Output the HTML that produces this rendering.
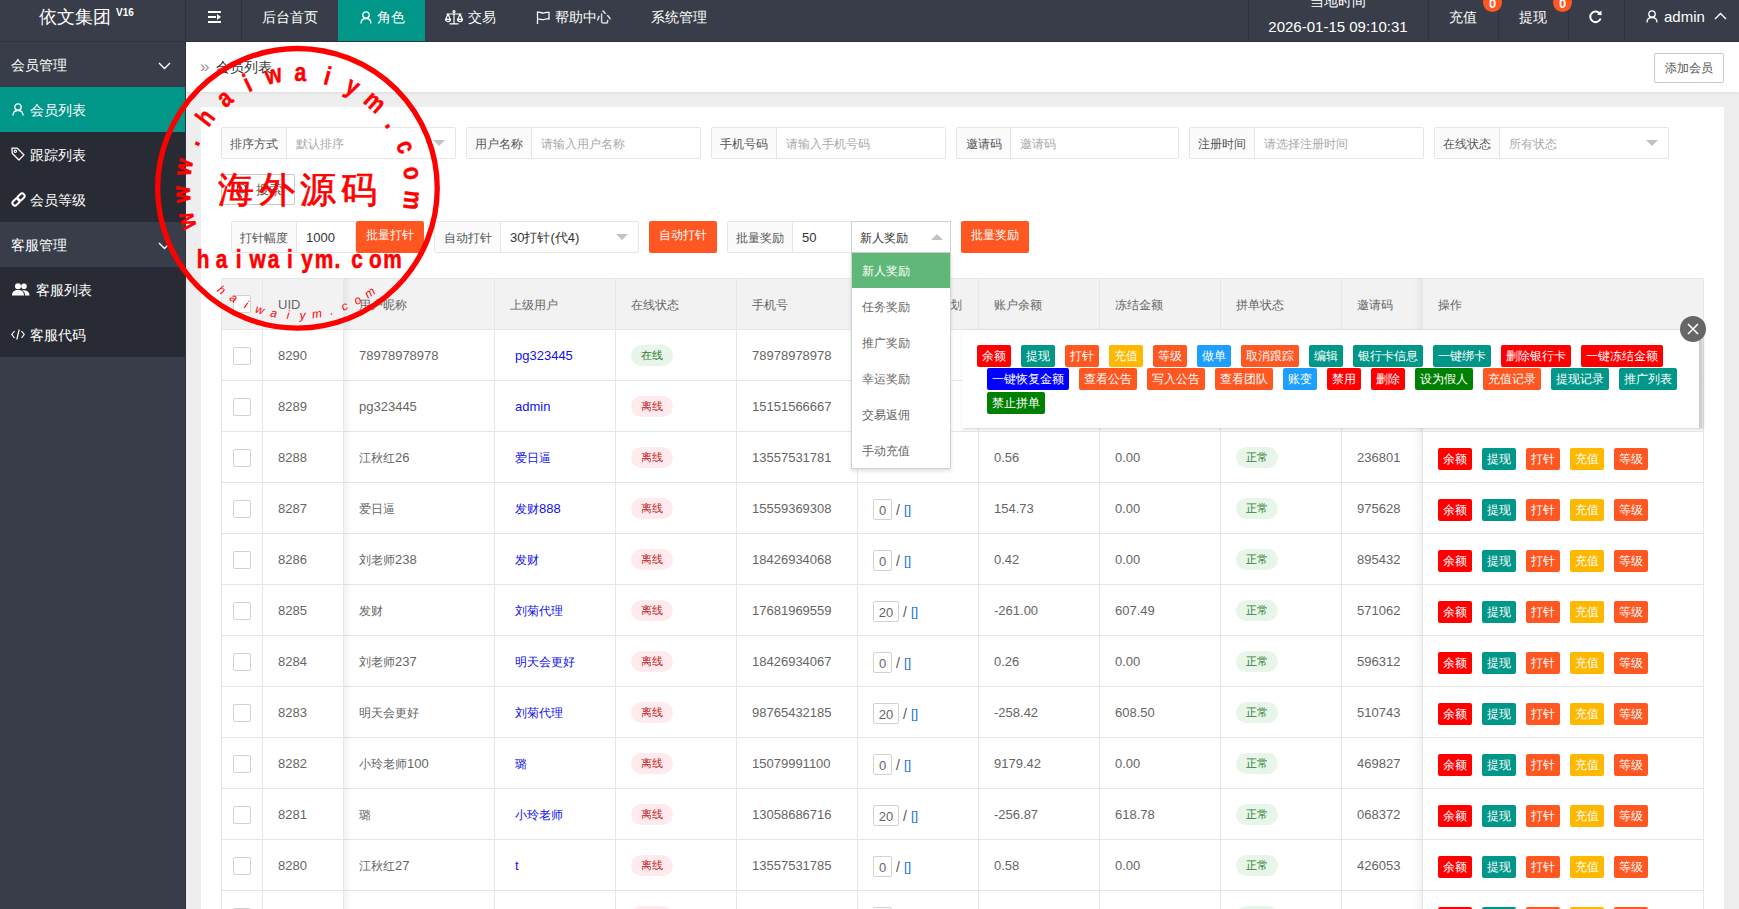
<!DOCTYPE html><html><head><meta charset="utf-8"><style>
*{box-sizing:border-box;margin:0;padding:0}
html,body{width:1739px;height:909px;overflow:hidden;background:#eeeeee;font-family:"Liberation Sans",sans-serif;color:#666;font-size:13px}
div,span{position:absolute;white-space:nowrap}
.hv{top:0;width:1px;height:41px;background:#30333c}
.nav{top:0;height:41px;line-height:34px;color:#fff;font-size:14px}
.sg{left:0;width:185px;height:45px;background:#393D49}
.si{left:0;width:185px;height:45px;background:#282B33}
.st{color:#fff;font-size:14px;line-height:20px}
.ig{height:32px;border:1px solid #e6e6e6;border-radius:2px;background:#fff;font-size:12px}
.lb{left:0;top:0;height:30px;line-height:32px;background:#FBFBFB;border-right:1px solid #e6e6e6;color:#555;text-align:center}
.ph{top:0;height:30px;line-height:32px;color:#aaa}
.vl{top:0;height:30px;line-height:32px;color:#333;font-size:13px}
.tri{width:0;height:0;border-left:6px solid transparent;border-right:6px solid transparent;border-top:6px solid #c2c2c2}
.tru{width:0;height:0;border-left:6px solid transparent;border-right:6px solid transparent;border-bottom:6px solid #c2c2c2}
.ob{height:32px;line-height:30px;background:#FF5722;color:#fff;font-size:12px;text-align:center;border-radius:2px}
.th{height:50px;line-height:52px;color:#666;font-size:13px}
em{font-style:normal;font-size:12.4px}
.td{line-height:52px;color:#666;font-size:13px}
.lk{color:#1010f0}
.bg{height:21px;line-height:21px;border-radius:11px;font-size:11px;text-align:center;width:42px}
.on{background:#e8f5e9;color:#2e7d32}
.off{background:#ffebee;color:#c62828}
.btn{height:22px;line-height:22px;color:#fff;font-size:12px;text-align:center;border-radius:2px}
.cb{width:18px;height:18px;border:1px solid #d2d2d2;border-radius:2px;background:#fff}
.nb{height:21px;border:1px solid #d2d2d2;border-radius:2px;line-height:21px;text-align:center;color:#666;font-size:13px;background:#fff}
</style></head><body>
<div style="left:0;top:0;width:1739px;height:42px;background:#393D49;border-bottom:1px solid #30333c"></div>
<div style="left:39px;top:0;height:34px;line-height:34px;color:#fff;font-size:18px">依文集团</div>
<div style="left:116px;top:7px;line-height:12px;color:#fff;font-size:10px;font-weight:bold">V16</div>
<div class="hv" style="left:185px"></div>
<div class="hv" style="left:241px"></div>
<div class="hv" style="left:1248px"></div>
<div class="hv" style="left:1428px"></div>
<div class="hv" style="left:1498px"></div>
<div class="hv" style="left:1568px"></div>
<div class="hv" style="left:1624px"></div>
<div style="left:338px;top:0;width:87px;height:41px;background:#009688"></div>
<div style="left:208px;top:11px;width:13px;height:2px;background:#fff"></div>
<div style="left:208px;top:16px;width:8px;height:2px;background:#fff"></div>
<div style="left:208px;top:21px;width:13px;height:2px;background:#fff"></div>
<div style="left:217px;top:14px;width:0;height:0;border-top:3px solid transparent;border-bottom:3px solid transparent;border-left:4px solid #fff"></div>
<div class="nav" style="left:262px">后台首页</div>
<svg style="position:absolute;left:360px;top:11px" width="12" height="13" viewBox="0 0 12 13"><circle cx="6" cy="4" r="3.2" fill="none" stroke="#fff" stroke-width="1.3"/><path d="M1 12.5 C1 8.5 3 7.5 6 7.5 C9 7.5 11 8.5 11 12.5" fill="none" stroke="#fff" stroke-width="1.3"/></svg>
<div class="nav" style="left:377px">角色</div>
<svg style="position:absolute;left:445px;top:10px" width="18" height="15" viewBox="0 0 18 15"><g fill="none" stroke="#fff" stroke-width="1.2"><circle cx="9" cy="1.6" r="1"/><path d="M9 2.6V13.5M4.5 13.9H13.5M1.5 4H16.5"/><path d="M3 4L0.8 9.3M3 4L5.2 9.3M15 4L12.8 9.3M15 4L17.2 9.3"/><path d="M0.5 9.3H5.5A2.5 2.3 0 0 1 0.5 9.3Z"/><path d="M12.5 9.3H17.5A2.5 2.3 0 0 1 12.5 9.3Z"/></g></svg>
<div class="nav" style="left:468px">交易</div>
<svg style="position:absolute;left:536px;top:11px" width="14" height="13" viewBox="0 0 14 13"><g fill="none" stroke="#fff" stroke-width="1.3"><path d="M1.5 0.5V13"/><path d="M1.5 1.5C4 0 6 3 8 2C10 1 12 1.5 13 1.5V8C12 8 10 7.5 8 8.5C6 9.5 4 7 1.5 8.5"/></g></svg>
<div class="nav" style="left:555px">帮助中心</div>
<div class="nav" style="left:651px">系统管理</div>
<div style="left:1248px;top:-9px;width:180px;text-align:center;line-height:20px;color:#fff;font-size:14px">当地时间</div>
<div style="left:1248px;top:17px;width:180px;text-align:center;line-height:20px;color:#fff;font-size:15px">2026-01-15 09:10:31</div>
<div class="nav" style="left:1449px">充值</div>
<div style="left:1483px;top:-7px;width:19px;height:19px;border-radius:50%;background:#FF5722;color:#fff;font-size:13px;font-weight:bold;line-height:21px;text-align:center">0</div>
<div class="nav" style="left:1519px">提现</div>
<div style="left:1553px;top:-7px;width:19px;height:19px;border-radius:50%;background:#FF5722;color:#fff;font-size:13px;font-weight:bold;line-height:21px;text-align:center">0</div>
<svg style="position:absolute;left:1588px;top:9px" width="15" height="15" viewBox="0 0 15 15"><path d="M12.2 5.2A5.3 5.3 0 1 0 12.6 9.5" fill="none" stroke="#fff" stroke-width="2"/><path d="M9 5.8L13.6 6.2L13.4 1.4Z" fill="#fff"/></svg>
<svg style="position:absolute;left:1646px;top:10px" width="12" height="13" viewBox="0 0 12 13"><circle cx="6" cy="4" r="3.2" fill="none" stroke="#fff" stroke-width="1.3"/><path d="M1 12.5 C1 8.5 3 7.5 6 7.5 C9 7.5 11 8.5 11 12.5" fill="none" stroke="#fff" stroke-width="1.3"/></svg>
<div class="nav" style="left:1664px;font-size:15px">admin</div>
<svg style="position:absolute;left:1714px;top:12px" width="13" height="8" viewBox="0 0 13 8"><path d="M1 7L6.5 1.5L12 7" fill="none" stroke="#fff" stroke-width="1.4"/></svg>
<div style="left:0;top:42px;width:186px;height:867px;background:#393D49;border-right:1px solid #30333c"></div>
<div class="sg" style="top:42px"></div>
<div class="st" style="left:11px;top:55px">会员管理</div>
<svg style="position:absolute;left:158px;top:62px" width="13" height="8" viewBox="0 0 13 8"><path d="M1 1L6.5 6.5L12 1" fill="none" stroke="#fff" stroke-width="1.4"/></svg>
<div style="left:0;top:87px;width:185px;height:45px;background:#009688"></div>
<svg style="position:absolute;left:12px;top:103px" width="12" height="13" viewBox="0 0 12 13"><circle cx="6" cy="4" r="3.2" fill="none" stroke="#fff" stroke-width="1.3"/><path d="M1 12.5 C1 8.5 3 7.5 6 7.5 C9 7.5 11 8.5 11 12.5" fill="none" stroke="#fff" stroke-width="1.3"/></svg>
<div class="st" style="left:30px;top:100px">会员列表</div>
<div class="si" style="top:132px"></div>
<svg style="position:absolute;left:11px;top:147px" width="14" height="14" viewBox="0 0 14 14"><path d="M1 1.2H6.3L13 7.9L7.9 13L1.2 6.3Z" fill="none" stroke="#fff" stroke-width="1.3" stroke-linejoin="round"/><circle cx="4.3" cy="4.3" r="1.2" fill="none" stroke="#fff" stroke-width="1.1"/></svg>
<div class="st" style="left:30px;top:145px">跟踪列表</div>
<div class="si" style="top:177px"></div>
<svg style="position:absolute;left:11px;top:192px" width="15" height="15" viewBox="0 0 15 15"><g fill="none" stroke="#fff" stroke-width="2"><rect x="-2.5" y="-4" width="5" height="8" rx="2.5" transform="translate(10 5) rotate(45)"/><rect x="-2.5" y="-4" width="5" height="8" rx="2.5" transform="translate(5 10) rotate(45)"/></g></svg>
<div class="st" style="left:30px;top:190px">会员等级</div>
<div class="sg" style="top:222px"></div>
<div class="st" style="left:11px;top:235px">客服管理</div>
<svg style="position:absolute;left:158px;top:242px" width="13" height="8" viewBox="0 0 13 8"><path d="M1 1L6.5 6.5L12 1" fill="none" stroke="#fff" stroke-width="1.4"/></svg>
<div class="si" style="top:267px"></div>
<svg style="position:absolute;left:12px;top:283px" width="18" height="13" viewBox="0 0 18 13"><g fill="#fff"><circle cx="6" cy="3.3" r="3"/><path d="M0 12.5C0 8.5 2.5 7 6 7C9.5 7 12 8.5 12 12.5Z"/><circle cx="12" cy="3.3" r="2.8"/><path d="M10 7.2C14 6.8 17.5 8 17.5 12.5H13C13 10 12 8.3 10 7.2Z"/></g></svg>
<div class="st" style="left:36px;top:280px">客服列表</div>
<div class="si" style="top:312px"></div>
<svg style="position:absolute;left:11px;top:329px" width="14" height="11" viewBox="0 0 14 11"><g fill="none" stroke="#fff" stroke-width="1.2"><path d="M3.5 2L0.8 5.5L3.5 9M10.5 2L13.2 5.5L10.5 9M8.2 0.5L5.8 10.5"/></g></svg>
<div class="st" style="left:30px;top:325px">客服代码</div>
<div style="left:186px;top:42px;width:1553px;height:50px;background:#fff;box-shadow:0 1px 3px rgba(0,0,0,.08)"></div>
<div style="left:200px;top:57px;line-height:20px;color:#999;font-size:17px">»</div>
<div style="left:216px;top:57px;line-height:20px;color:#333;font-size:14px">会员列表</div>
<div style="left:1654px;top:53px;width:70px;height:30px;border:1px solid #c9c9c9;border-radius:2px;background:#fff;color:#555;font-size:12px;line-height:28px;text-align:center">添加会员</div>
<div style="left:201px;top:107px;width:1523px;height:802px;background:#fff"></div>
<div class="ig" style="left:221px;top:127px;width:235px;height:32px"><div class="lb" style="width:65px;height:30px;line-height:32px">排序方式</div><div class="ph" style="left:74px;height:30px;line-height:32px">默认排序</div><div class="tri" style="left:211px;top:12px"></div></div>
<div class="ig" style="left:466px;top:127px;width:235px;height:32px"><div class="lb" style="width:65px;height:30px;line-height:32px">用户名称</div><div class="ph" style="left:74px;height:30px;line-height:32px">请输入用户名称</div></div>
<div class="ig" style="left:711px;top:127px;width:235px;height:32px"><div class="lb" style="width:65px;height:30px;line-height:32px">手机号码</div><div class="ph" style="left:74px;height:30px;line-height:32px">请输入手机号码</div></div>
<div class="ig" style="left:956px;top:127px;width:223px;height:32px"><div class="lb" style="width:54px;height:30px;line-height:32px">邀请码</div><div class="ph" style="left:63px;height:30px;line-height:32px">邀请码</div></div>
<div class="ig" style="left:1189px;top:127px;width:235px;height:32px"><div class="lb" style="width:65px;height:30px;line-height:32px">注册时间</div><div class="ph" style="left:74px;height:30px;line-height:32px">请选择注册时间</div></div>
<div class="ig" style="left:1434px;top:127px;width:235px;height:32px"><div class="lb" style="width:65px;height:30px;line-height:32px">在线状态</div><div class="ph" style="left:74px;height:30px;line-height:32px">所有状态</div><div class="tri" style="left:211px;top:12px"></div></div>
<div style="left:221px;top:174px;width:74px;height:31px;border:1px solid #c9c9c9;border-radius:2px;background:#fff"></div>
<svg style="position:absolute;left:236px;top:183px" width="13" height="13" viewBox="0 0 13 13"><circle cx="5.5" cy="5.5" r="4.3" fill="none" stroke="#555" stroke-width="1.3"/><path d="M8.7 8.7L12.3 12.3" stroke="#555" stroke-width="1.4"/></svg>
<div style="left:256px;top:180px;line-height:20px;color:#555;font-size:13px">搜索</div>
<div class="ig" style="left:231px;top:221px;width:125px;height:32px"><div class="lb" style="width:65px;height:30px;line-height:32px">打针幅度</div><div class="vl" style="left:74px;height:30px;line-height:32px">1000</div></div>
<div class="ob" style="left:356px;top:221px;width:68px;line-height:28px">批量打针</div>
<div class="ig" style="left:434px;top:221px;width:205px;height:32px"><div class="lb" style="width:66px;height:30px;line-height:32px">自动打针</div><div class="vl" style="left:75px;height:30px;line-height:32px">30打针(代4)</div><div class="tri" style="left:181px;top:12px"></div></div>
<div class="ob" style="left:649px;top:221px;width:68px;line-height:28px">自动打针</div>
<div class="ig" style="left:727px;top:221px;width:125px;height:32px"><div class="lb" style="width:65px;height:30px;line-height:32px">批量奖励</div><div class="vl" style="left:74px;height:30px;line-height:32px">50</div></div>
<div style="left:851px;top:221px;width:100px;height:32px;border:1px solid #d2d2d2;background:#fff"><div class="vl" style="left:8px;font-size:12px">新人奖励</div><div class="tru" style="left:79px;top:12px"></div></div>
<div class="ob" style="left:961px;top:221px;width:68px;line-height:28px">批量奖励</div>
<div style="left:221px;top:278px;width:1483px;height:631px;background:#fff;border:1px solid #e6e6e6;border-bottom:none"></div>
<div style="left:222px;top:279px;width:1481px;height:50px;background:#f2f2f2"></div>
<div style="left:221px;top:329px;width:1483px;height:1px;background:#e6e6e6"></div>
<div style="left:221px;top:380px;width:1483px;height:1px;background:#e6e6e6"></div>
<div style="left:221px;top:431px;width:1483px;height:1px;background:#e6e6e6"></div>
<div style="left:221px;top:482px;width:1483px;height:1px;background:#e6e6e6"></div>
<div style="left:221px;top:533px;width:1483px;height:1px;background:#e6e6e6"></div>
<div style="left:221px;top:584px;width:1483px;height:1px;background:#e6e6e6"></div>
<div style="left:221px;top:635px;width:1483px;height:1px;background:#e6e6e6"></div>
<div style="left:221px;top:686px;width:1483px;height:1px;background:#e6e6e6"></div>
<div style="left:221px;top:737px;width:1483px;height:1px;background:#e6e6e6"></div>
<div style="left:221px;top:788px;width:1483px;height:1px;background:#e6e6e6"></div>
<div style="left:221px;top:839px;width:1483px;height:1px;background:#e6e6e6"></div>
<div style="left:221px;top:890px;width:1483px;height:1px;background:#e6e6e6"></div>
<div style="left:262px;top:278px;width:1px;height:631px;background:#e6e6e6"></div>
<div style="left:343px;top:278px;width:1px;height:631px;background:#e6e6e6"></div>
<div style="left:494px;top:278px;width:1px;height:631px;background:#e6e6e6"></div>
<div style="left:615px;top:278px;width:1px;height:631px;background:#e6e6e6"></div>
<div style="left:736px;top:278px;width:1px;height:631px;background:#e6e6e6"></div>
<div style="left:857px;top:278px;width:1px;height:631px;background:#e6e6e6"></div>
<div style="left:978px;top:278px;width:1px;height:631px;background:#e6e6e6"></div>
<div style="left:1099px;top:278px;width:1px;height:631px;background:#e6e6e6"></div>
<div style="left:1220px;top:278px;width:1px;height:631px;background:#e6e6e6"></div>
<div style="left:1341px;top:278px;width:1px;height:631px;background:#e6e6e6"></div>
<div style="left:1422px;top:278px;width:1px;height:631px;background:#e6e6e6"></div>
<div style="left:344px;top:278px;width:8px;height:631px;background:linear-gradient(to right,rgba(0,0,0,.05),rgba(0,0,0,0))"></div>
<div style="left:1414px;top:278px;width:8px;height:631px;background:linear-gradient(to left,rgba(0,0,0,.05),rgba(0,0,0,0))"></div>
<div class="th" style="left:890px;top:279px"><em>当前打针计划</em></div>
<div class="th" style="left:278px;top:279px">UID</div>
<div class="th" style="left:359px;top:279px"><em>用户昵称</em></div>
<div class="th" style="left:510px;top:279px"><em>上级用户</em></div>
<div class="th" style="left:631px;top:279px"><em>在线状态</em></div>
<div class="th" style="left:752px;top:279px"><em>手机号</em></div>
<div class="th" style="left:994px;top:279px"><em>账户余额</em></div>
<div class="th" style="left:1115px;top:279px"><em>冻结金额</em></div>
<div class="th" style="left:1236px;top:279px"><em>拼单状态</em></div>
<div class="th" style="left:1357px;top:279px"><em>邀请码</em></div>
<div class="th" style="left:1438px;top:279px"><em>操作</em></div>
<div class="cb" style="left:233px;top:295px"></div>
<div class="cb" style="left:233px;top:347px"></div>
<div class="td" style="left:278px;top:330px">8290</div>
<div class="td" style="left:359px;top:330px">78978978978</div>
<div class="td lk" style="left:515px;top:330px">pg323445</div>
<div class="bg on" style="left:631px;top:345px">在线</div>
<div class="td" style="left:752px;top:330px">78978978978</div>
<div class="cb" style="left:233px;top:398px"></div>
<div class="td" style="left:278px;top:381px">8289</div>
<div class="td" style="left:359px;top:381px">pg323445</div>
<div class="td lk" style="left:515px;top:381px">admin</div>
<div class="bg off" style="left:631px;top:396px">离线</div>
<div class="td" style="left:752px;top:381px">15151566667</div>
<div class="cb" style="left:233px;top:449px"></div>
<div class="td" style="left:278px;top:432px">8288</div>
<div class="td" style="left:359px;top:432px"><em>江秋红</em>26</div>
<div class="td lk" style="left:515px;top:432px"><em>爱日逼</em></div>
<div class="bg off" style="left:631px;top:447px">离线</div>
<div class="td" style="left:752px;top:432px">13557531781</div>
<div class="td" style="left:994px;top:432px">0.56</div>
<div class="td" style="left:1115px;top:432px">0.00</div>
<div class="bg on" style="left:1236px;top:447px">正常</div>
<div class="td" style="left:1357px;top:432px">236801</div>
<div class="btn" style="left:1438px;top:448px;width:34px;background:#FF0000">余额</div>
<div class="btn" style="left:1482px;top:448px;width:34px;background:#009688">提现</div>
<div class="btn" style="left:1526px;top:448px;width:34px;background:#FF5722">打针</div>
<div class="btn" style="left:1570px;top:448px;width:34px;background:#FFB800">充值</div>
<div class="btn" style="left:1614px;top:448px;width:34px;background:#FF5722">等级</div>
<div class="cb" style="left:233px;top:500px"></div>
<div class="td" style="left:278px;top:483px">8287</div>
<div class="td" style="left:359px;top:483px"><em>爱日逼</em></div>
<div class="td lk" style="left:515px;top:483px"><em>发财</em>888</div>
<div class="bg off" style="left:631px;top:498px">离线</div>
<div class="td" style="left:752px;top:483px">15559369308</div>
<div class="nb" style="left:873px;top:499px;width:19px">0</div>
<div class="td" style="left:896px;top:484px;color:#555;font-size:14px">/</div>
<div class="td" style="left:904px;top:484px;color:#1E6FD9">[]</div>
<div class="td" style="left:994px;top:483px">154.73</div>
<div class="td" style="left:1115px;top:483px">0.00</div>
<div class="bg on" style="left:1236px;top:498px">正常</div>
<div class="td" style="left:1357px;top:483px">975628</div>
<div class="btn" style="left:1438px;top:499px;width:34px;background:#FF0000">余额</div>
<div class="btn" style="left:1482px;top:499px;width:34px;background:#009688">提现</div>
<div class="btn" style="left:1526px;top:499px;width:34px;background:#FF5722">打针</div>
<div class="btn" style="left:1570px;top:499px;width:34px;background:#FFB800">充值</div>
<div class="btn" style="left:1614px;top:499px;width:34px;background:#FF5722">等级</div>
<div class="cb" style="left:233px;top:551px"></div>
<div class="td" style="left:278px;top:534px">8286</div>
<div class="td" style="left:359px;top:534px"><em>刘老师</em>238</div>
<div class="td lk" style="left:515px;top:534px"><em>发财</em></div>
<div class="bg off" style="left:631px;top:549px">离线</div>
<div class="td" style="left:752px;top:534px">18426934068</div>
<div class="nb" style="left:873px;top:550px;width:19px">0</div>
<div class="td" style="left:896px;top:535px;color:#555;font-size:14px">/</div>
<div class="td" style="left:904px;top:535px;color:#1E6FD9">[]</div>
<div class="td" style="left:994px;top:534px">0.42</div>
<div class="td" style="left:1115px;top:534px">0.00</div>
<div class="bg on" style="left:1236px;top:549px">正常</div>
<div class="td" style="left:1357px;top:534px">895432</div>
<div class="btn" style="left:1438px;top:550px;width:34px;background:#FF0000">余额</div>
<div class="btn" style="left:1482px;top:550px;width:34px;background:#009688">提现</div>
<div class="btn" style="left:1526px;top:550px;width:34px;background:#FF5722">打针</div>
<div class="btn" style="left:1570px;top:550px;width:34px;background:#FFB800">充值</div>
<div class="btn" style="left:1614px;top:550px;width:34px;background:#FF5722">等级</div>
<div class="cb" style="left:233px;top:602px"></div>
<div class="td" style="left:278px;top:585px">8285</div>
<div class="td" style="left:359px;top:585px"><em>发财</em></div>
<div class="td lk" style="left:515px;top:585px"><em>刘菊代理</em></div>
<div class="bg off" style="left:631px;top:600px">离线</div>
<div class="td" style="left:752px;top:585px">17681969559</div>
<div class="nb" style="left:873px;top:601px;width:26px">20</div>
<div class="td" style="left:903px;top:586px;color:#555;font-size:14px">/</div>
<div class="td" style="left:911px;top:586px;color:#1E6FD9">[]</div>
<div class="td" style="left:994px;top:585px">-261.00</div>
<div class="td" style="left:1115px;top:585px">607.49</div>
<div class="bg on" style="left:1236px;top:600px">正常</div>
<div class="td" style="left:1357px;top:585px">571062</div>
<div class="btn" style="left:1438px;top:601px;width:34px;background:#FF0000">余额</div>
<div class="btn" style="left:1482px;top:601px;width:34px;background:#009688">提现</div>
<div class="btn" style="left:1526px;top:601px;width:34px;background:#FF5722">打针</div>
<div class="btn" style="left:1570px;top:601px;width:34px;background:#FFB800">充值</div>
<div class="btn" style="left:1614px;top:601px;width:34px;background:#FF5722">等级</div>
<div class="cb" style="left:233px;top:653px"></div>
<div class="td" style="left:278px;top:636px">8284</div>
<div class="td" style="left:359px;top:636px"><em>刘老师</em>237</div>
<div class="td lk" style="left:515px;top:636px"><em>明天会更好</em></div>
<div class="bg off" style="left:631px;top:651px">离线</div>
<div class="td" style="left:752px;top:636px">18426934067</div>
<div class="nb" style="left:873px;top:652px;width:19px">0</div>
<div class="td" style="left:896px;top:637px;color:#555;font-size:14px">/</div>
<div class="td" style="left:904px;top:637px;color:#1E6FD9">[]</div>
<div class="td" style="left:994px;top:636px">0.26</div>
<div class="td" style="left:1115px;top:636px">0.00</div>
<div class="bg on" style="left:1236px;top:651px">正常</div>
<div class="td" style="left:1357px;top:636px">596312</div>
<div class="btn" style="left:1438px;top:652px;width:34px;background:#FF0000">余额</div>
<div class="btn" style="left:1482px;top:652px;width:34px;background:#009688">提现</div>
<div class="btn" style="left:1526px;top:652px;width:34px;background:#FF5722">打针</div>
<div class="btn" style="left:1570px;top:652px;width:34px;background:#FFB800">充值</div>
<div class="btn" style="left:1614px;top:652px;width:34px;background:#FF5722">等级</div>
<div class="cb" style="left:233px;top:704px"></div>
<div class="td" style="left:278px;top:687px">8283</div>
<div class="td" style="left:359px;top:687px"><em>明天会更好</em></div>
<div class="td lk" style="left:515px;top:687px"><em>刘菊代理</em></div>
<div class="bg off" style="left:631px;top:702px">离线</div>
<div class="td" style="left:752px;top:687px">98765432185</div>
<div class="nb" style="left:873px;top:703px;width:26px">20</div>
<div class="td" style="left:903px;top:688px;color:#555;font-size:14px">/</div>
<div class="td" style="left:911px;top:688px;color:#1E6FD9">[]</div>
<div class="td" style="left:994px;top:687px">-258.42</div>
<div class="td" style="left:1115px;top:687px">608.50</div>
<div class="bg on" style="left:1236px;top:702px">正常</div>
<div class="td" style="left:1357px;top:687px">510743</div>
<div class="btn" style="left:1438px;top:703px;width:34px;background:#FF0000">余额</div>
<div class="btn" style="left:1482px;top:703px;width:34px;background:#009688">提现</div>
<div class="btn" style="left:1526px;top:703px;width:34px;background:#FF5722">打针</div>
<div class="btn" style="left:1570px;top:703px;width:34px;background:#FFB800">充值</div>
<div class="btn" style="left:1614px;top:703px;width:34px;background:#FF5722">等级</div>
<div class="cb" style="left:233px;top:755px"></div>
<div class="td" style="left:278px;top:738px">8282</div>
<div class="td" style="left:359px;top:738px"><em>小玲老师</em>100</div>
<div class="td lk" style="left:515px;top:738px"><em>璐</em></div>
<div class="bg off" style="left:631px;top:753px">离线</div>
<div class="td" style="left:752px;top:738px">15079991100</div>
<div class="nb" style="left:873px;top:754px;width:19px">0</div>
<div class="td" style="left:896px;top:739px;color:#555;font-size:14px">/</div>
<div class="td" style="left:904px;top:739px;color:#1E6FD9">[]</div>
<div class="td" style="left:994px;top:738px">9179.42</div>
<div class="td" style="left:1115px;top:738px">0.00</div>
<div class="bg on" style="left:1236px;top:753px">正常</div>
<div class="td" style="left:1357px;top:738px">469827</div>
<div class="btn" style="left:1438px;top:754px;width:34px;background:#FF0000">余额</div>
<div class="btn" style="left:1482px;top:754px;width:34px;background:#009688">提现</div>
<div class="btn" style="left:1526px;top:754px;width:34px;background:#FF5722">打针</div>
<div class="btn" style="left:1570px;top:754px;width:34px;background:#FFB800">充值</div>
<div class="btn" style="left:1614px;top:754px;width:34px;background:#FF5722">等级</div>
<div class="cb" style="left:233px;top:806px"></div>
<div class="td" style="left:278px;top:789px">8281</div>
<div class="td" style="left:359px;top:789px"><em>璐</em></div>
<div class="td lk" style="left:515px;top:789px"><em>小玲老师</em></div>
<div class="bg off" style="left:631px;top:804px">离线</div>
<div class="td" style="left:752px;top:789px">13058686716</div>
<div class="nb" style="left:873px;top:805px;width:26px">20</div>
<div class="td" style="left:903px;top:790px;color:#555;font-size:14px">/</div>
<div class="td" style="left:911px;top:790px;color:#1E6FD9">[]</div>
<div class="td" style="left:994px;top:789px">-256.87</div>
<div class="td" style="left:1115px;top:789px">618.78</div>
<div class="bg on" style="left:1236px;top:804px">正常</div>
<div class="td" style="left:1357px;top:789px">068372</div>
<div class="btn" style="left:1438px;top:805px;width:34px;background:#FF0000">余额</div>
<div class="btn" style="left:1482px;top:805px;width:34px;background:#009688">提现</div>
<div class="btn" style="left:1526px;top:805px;width:34px;background:#FF5722">打针</div>
<div class="btn" style="left:1570px;top:805px;width:34px;background:#FFB800">充值</div>
<div class="btn" style="left:1614px;top:805px;width:34px;background:#FF5722">等级</div>
<div class="cb" style="left:233px;top:857px"></div>
<div class="td" style="left:278px;top:840px">8280</div>
<div class="td" style="left:359px;top:840px"><em>江秋红</em>27</div>
<div class="td lk" style="left:515px;top:840px">t</div>
<div class="bg off" style="left:631px;top:855px">离线</div>
<div class="td" style="left:752px;top:840px">13557531785</div>
<div class="nb" style="left:873px;top:856px;width:19px">0</div>
<div class="td" style="left:896px;top:841px;color:#555;font-size:14px">/</div>
<div class="td" style="left:904px;top:841px;color:#1E6FD9">[]</div>
<div class="td" style="left:994px;top:840px">0.58</div>
<div class="td" style="left:1115px;top:840px">0.00</div>
<div class="bg on" style="left:1236px;top:855px">正常</div>
<div class="td" style="left:1357px;top:840px">426053</div>
<div class="btn" style="left:1438px;top:856px;width:34px;background:#FF0000">余额</div>
<div class="btn" style="left:1482px;top:856px;width:34px;background:#009688">提现</div>
<div class="btn" style="left:1526px;top:856px;width:34px;background:#FF5722">打针</div>
<div class="btn" style="left:1570px;top:856px;width:34px;background:#FFB800">充值</div>
<div class="btn" style="left:1614px;top:856px;width:34px;background:#FF5722">等级</div>
<div class="cb" style="left:233px;top:908px"></div>
<div class="bg off" style="left:631px;top:906px">离线</div>
<div class="nb" style="left:873px;top:907px;width:19px">0</div>
<div class="td" style="left:896px;top:892px;color:#555;font-size:14px">/</div>
<div class="td" style="left:904px;top:892px;color:#1E6FD9">[]</div>
<div class="bg on" style="left:1236px;top:906px">正常</div>
<div class="btn" style="left:1438px;top:907px;width:34px;background:#FF0000">余额</div>
<div class="btn" style="left:1482px;top:907px;width:34px;background:#009688">提现</div>
<div class="btn" style="left:1526px;top:907px;width:34px;background:#FF5722">打针</div>
<div class="btn" style="left:1570px;top:907px;width:34px;background:#FFB800">充值</div>
<div class="btn" style="left:1614px;top:907px;width:34px;background:#FF5722">等级</div>
<div style="left:851px;top:253px;width:100px;height:216px;background:#fff;border:1px solid #d2d2d2;box-shadow:0 2px 4px rgba(0,0,0,.12)"></div>
<div style="left:852px;top:253px;width:98px;height:35px;background:#5FB878"></div>
<div style="left:862px;top:253px;line-height:36px;font-size:12px;color:#fff">新人奖励</div>
<div style="left:862px;top:289px;line-height:36px;font-size:12px;color:#666">任务奖励</div>
<div style="left:862px;top:325px;line-height:36px;font-size:12px;color:#666">推广奖励</div>
<div style="left:862px;top:361px;line-height:36px;font-size:12px;color:#666">幸运奖励</div>
<div style="left:862px;top:397px;line-height:36px;font-size:12px;color:#666">交易返佣</div>
<div style="left:862px;top:433px;line-height:36px;font-size:12px;color:#666">手动充值</div>
<div style="left:962px;top:330px;width:740px;height:98px;background:#fff;box-shadow:1px 1px 3px rgba(0,0,0,.2)"></div>
<div style="left:1699px;top:340px;width:3px;height:88px;background:#cfcfcf"></div>
<div class="btn" style="left:977px;top:345px;width:34px;background:#FF0000">余额</div>
<div class="btn" style="left:1021px;top:345px;width:34px;background:#009688">提现</div>
<div class="btn" style="left:1065px;top:345px;width:34px;background:#FF5722">打针</div>
<div class="btn" style="left:1109px;top:345px;width:34px;background:#FFB800">充值</div>
<div class="btn" style="left:1153px;top:345px;width:34px;background:#FF5722">等级</div>
<div class="btn" style="left:1197px;top:345px;width:34px;background:#1E9FFF">做单</div>
<div class="btn" style="left:1241px;top:345px;width:58px;background:#FF5722">取消跟踪</div>
<div class="btn" style="left:1309px;top:345px;width:34px;background:#009688">编辑</div>
<div class="btn" style="left:1353px;top:345px;width:70px;background:#009688">银行卡信息</div>
<div class="btn" style="left:1433px;top:345px;width:58px;background:#009688">一键绑卡</div>
<div class="btn" style="left:1501px;top:345px;width:70px;background:#FF0000">删除银行卡</div>
<div class="btn" style="left:1581px;top:345px;width:82px;background:#FF0000">一键冻结金额</div>
<div class="btn" style="left:987px;top:368px;width:82px;background:#0000FF">一键恢复金额</div>
<div class="btn" style="left:1079px;top:368px;width:58px;background:#FF5722">查看公告</div>
<div class="btn" style="left:1147px;top:368px;width:58px;background:#FF5722">写入公告</div>
<div class="btn" style="left:1215px;top:368px;width:58px;background:#FF5722">查看团队</div>
<div class="btn" style="left:1283px;top:368px;width:34px;background:#1E9FFF">账变</div>
<div class="btn" style="left:1327px;top:368px;width:34px;background:#FF0000">禁用</div>
<div class="btn" style="left:1371px;top:368px;width:34px;background:#FF0000">删除</div>
<div class="btn" style="left:1415px;top:368px;width:58px;background:#008000">设为假人</div>
<div class="btn" style="left:1483px;top:368px;width:58px;background:#FF5722">充值记录</div>
<div class="btn" style="left:1551px;top:368px;width:58px;background:#009688">提现记录</div>
<div class="btn" style="left:1619px;top:368px;width:58px;background:#009688">推广列表</div>
<div class="btn" style="left:987px;top:392px;width:58px;background:#008000">禁止拼单</div>
<div style="left:1680px;top:316px;width:26px;height:26px;border-radius:50%;background:#666"></div>
<svg style="position:absolute;left:1686px;top:322px" width="14" height="14" viewBox="0 0 14 14"><path d="M2 2L12 12M12 2L2 12" stroke="#fff" stroke-width="1.6"/></svg>
<svg style="position:absolute;left:0;top:0" width="1739" height="909" viewBox="0 0 1739 909"><circle cx="297.45" cy="188.30" r="139.8" fill="none" stroke="#FF0000" stroke-width="5.3"/><text transform="translate(194.38 218.83) rotate(-106.50) scale(0.82 1)" text-anchor="middle" font-family="Liberation Sans" font-weight="bold" font-size="26" fill="#FF0000" stroke="#FF0000" stroke-width="0.5">w</text><text transform="translate(190.10 193.93) rotate(-93.00) scale(0.82 1)" text-anchor="middle" font-family="Liberation Sans" font-weight="bold" font-size="26" fill="#FF0000" stroke="#FF0000" stroke-width="0.5">w</text><text transform="translate(191.75 168.71) rotate(-79.50) scale(0.82 1)" text-anchor="middle" font-family="Liberation Sans" font-weight="bold" font-size="26" fill="#FF0000" stroke="#FF0000" stroke-width="0.5">w</text><text transform="translate(199.24 144.58) rotate(-66.00) scale(0.82 1)" text-anchor="middle" font-family="Liberation Sans" font-weight="bold" font-size="26" fill="#FF0000" stroke="#FF0000" stroke-width="0.5">.</text><text transform="translate(212.16 122.86) rotate(-52.50) scale(0.82 1)" text-anchor="middle" font-family="Liberation Sans" font-weight="bold" font-size="26" fill="#FF0000" stroke="#FF0000" stroke-width="0.5">h</text><text transform="translate(229.80 104.76) rotate(-39.00) scale(0.82 1)" text-anchor="middle" font-family="Liberation Sans" font-weight="bold" font-size="26" fill="#FF0000" stroke="#FF0000" stroke-width="0.5">a</text><text transform="translate(251.17 91.27) rotate(-25.50) scale(0.82 1)" text-anchor="middle" font-family="Liberation Sans" font-weight="bold" font-size="26" fill="#FF0000" stroke="#FF0000" stroke-width="0.5">i</text><text transform="translate(275.10 83.15) rotate(-12.00) scale(0.82 1)" text-anchor="middle" font-family="Liberation Sans" font-weight="bold" font-size="26" fill="#FF0000" stroke="#FF0000" stroke-width="0.5">w</text><text transform="translate(300.26 80.84) rotate(1.50) scale(0.82 1)" text-anchor="middle" font-family="Liberation Sans" font-weight="bold" font-size="26" fill="#FF0000" stroke="#FF0000" stroke-width="0.5">a</text><text transform="translate(325.27 84.46) rotate(15.00) scale(0.82 1)" text-anchor="middle" font-family="Liberation Sans" font-weight="bold" font-size="26" fill="#FF0000" stroke="#FF0000" stroke-width="0.5">i</text><text transform="translate(348.74 93.83) rotate(28.50) scale(0.82 1)" text-anchor="middle" font-family="Liberation Sans" font-weight="bold" font-size="26" fill="#FF0000" stroke="#FF0000" stroke-width="0.5">y</text><text transform="translate(369.38 108.41) rotate(42.00) scale(0.82 1)" text-anchor="middle" font-family="Liberation Sans" font-weight="bold" font-size="26" fill="#FF0000" stroke="#FF0000" stroke-width="0.5">m</text><text transform="translate(386.04 127.41) rotate(55.50) scale(0.82 1)" text-anchor="middle" font-family="Liberation Sans" font-weight="bold" font-size="26" fill="#FF0000" stroke="#FF0000" stroke-width="0.5">.</text><text transform="translate(397.81 149.78) rotate(69.00) scale(0.82 1)" text-anchor="middle" font-family="Liberation Sans" font-weight="bold" font-size="26" fill="#FF0000" stroke="#FF0000" stroke-width="0.5">c</text><text transform="translate(404.03 174.27) rotate(82.50) scale(0.82 1)" text-anchor="middle" font-family="Liberation Sans" font-weight="bold" font-size="26" fill="#FF0000" stroke="#FF0000" stroke-width="0.5">o</text><text transform="translate(404.36 199.54) rotate(96.00) scale(0.82 1)" text-anchor="middle" font-family="Liberation Sans" font-weight="bold" font-size="26" fill="#FF0000" stroke="#FF0000" stroke-width="0.5">m</text><text transform="translate(219.16 293.33) rotate(36.70)" text-anchor="middle" font-family="Liberation Sans" font-style="italic" font-size="12" fill="#FF0000">h</text><text transform="translate(231.55 301.52) rotate(30.20)" text-anchor="middle" font-family="Liberation Sans" font-style="italic" font-size="12" fill="#FF0000">a</text><text transform="translate(244.79 308.25) rotate(23.70)" text-anchor="middle" font-family="Liberation Sans" font-style="italic" font-size="12" fill="#FF0000">i</text><text transform="translate(258.71 313.44) rotate(17.20)" text-anchor="middle" font-family="Liberation Sans" font-style="italic" font-size="12" fill="#FF0000">w</text><text transform="translate(273.13 317.02) rotate(10.70)" text-anchor="middle" font-family="Liberation Sans" font-style="italic" font-size="12" fill="#FF0000">a</text><text transform="translate(287.86 318.95) rotate(4.20)" text-anchor="middle" font-family="Liberation Sans" font-style="italic" font-size="12" fill="#FF0000">i</text><text transform="translate(302.71 319.19) rotate(-2.30)" text-anchor="middle" font-family="Liberation Sans" font-style="italic" font-size="12" fill="#FF0000">y</text><text transform="translate(317.49 317.76) rotate(-8.80)" text-anchor="middle" font-family="Liberation Sans" font-style="italic" font-size="12" fill="#FF0000">m</text><text transform="translate(332.02 314.66) rotate(-15.30)" text-anchor="middle" font-family="Liberation Sans" font-style="italic" font-size="12" fill="#FF0000">.</text><text transform="translate(346.10 309.93) rotate(-21.80)" text-anchor="middle" font-family="Liberation Sans" font-style="italic" font-size="12" fill="#FF0000">c</text><text transform="translate(359.56 303.64) rotate(-28.30)" text-anchor="middle" font-family="Liberation Sans" font-style="italic" font-size="12" fill="#FF0000">o</text><text transform="translate(372.21 295.87) rotate(-34.80)" text-anchor="middle" font-family="Liberation Sans" font-style="italic" font-size="12" fill="#FF0000">m</text><text transform="translate(203.00 268) scale(0.8 1)" text-anchor="middle" font-family="Liberation Sans" font-weight="bold" font-size="26" fill="#FF0000" stroke="#FF0000" stroke-width="0.6">h</text><text transform="translate(221.60 268) scale(0.8 1)" text-anchor="middle" font-family="Liberation Sans" font-weight="bold" font-size="26" fill="#FF0000" stroke="#FF0000" stroke-width="0.6">a</text><text transform="translate(238.70 268) scale(0.8 1)" text-anchor="middle" font-family="Liberation Sans" font-weight="bold" font-size="26" fill="#FF0000" stroke="#FF0000" stroke-width="0.6">i</text><text transform="translate(257.70 268) scale(0.8 1)" text-anchor="middle" font-family="Liberation Sans" font-weight="bold" font-size="26" fill="#FF0000" stroke="#FF0000" stroke-width="0.6">w</text><text transform="translate(273.50 268) scale(0.8 1)" text-anchor="middle" font-family="Liberation Sans" font-weight="bold" font-size="26" fill="#FF0000" stroke="#FF0000" stroke-width="0.6">a</text><text transform="translate(290.00 268) scale(0.8 1)" text-anchor="middle" font-family="Liberation Sans" font-weight="bold" font-size="26" fill="#FF0000" stroke="#FF0000" stroke-width="0.6">i</text><text transform="translate(307.00 268) scale(0.8 1)" text-anchor="middle" font-family="Liberation Sans" font-weight="bold" font-size="26" fill="#FF0000" stroke="#FF0000" stroke-width="0.6">y</text><text transform="translate(324.00 268) scale(0.8 1)" text-anchor="middle" font-family="Liberation Sans" font-weight="bold" font-size="26" fill="#FF0000" stroke="#FF0000" stroke-width="0.6">m</text><text transform="translate(337.50 268) scale(0.8 1)" text-anchor="middle" font-family="Liberation Sans" font-weight="bold" font-size="26" fill="#FF0000" stroke="#FF0000" stroke-width="0.6">.</text><text transform="translate(357.00 268) scale(0.8 1)" text-anchor="middle" font-family="Liberation Sans" font-weight="bold" font-size="26" fill="#FF0000" stroke="#FF0000" stroke-width="0.6">c</text><text transform="translate(375.40 268) scale(0.8 1)" text-anchor="middle" font-family="Liberation Sans" font-weight="bold" font-size="26" fill="#FF0000" stroke="#FF0000" stroke-width="0.6">o</text><text transform="translate(392.50 268) scale(0.8 1)" text-anchor="middle" font-family="Liberation Sans" font-weight="bold" font-size="26" fill="#FF0000" stroke="#FF0000" stroke-width="0.6">m</text><text x="218" y="202" font-family="Liberation Sans" font-size="36" letter-spacing="5" fill="#FF0000" stroke="#FF0000" stroke-width="0.7" transform="translate(0 0)">海外源码</text></svg>
</body></html>
